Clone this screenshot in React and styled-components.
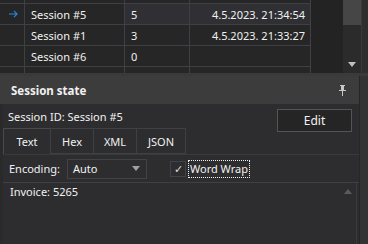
import styled, { createGlobalStyle } from "styled-components";

const Global = createGlobalStyle`
  body {
    margin: 0;
    background: #2d2d30;
    font-family: "Noto Sans", "Open Sans", sans-serif;
    font-size: 11px;
    color: #f1f1f1;
  }
`;

const Page = styled.div`
  width: 368px;
  height: 244px;
  overflow: hidden;
  display: flex;
  flex-direction: column;
  background: #333337;
`;

const GridArea = styled.div`
  height: 73px;
  flex-shrink: 0;
  display: flex;
  border-bottom: 3px solid #3a3a3a;
  background: #1e1e1e;
  overflow: hidden;
`;

const Table = styled.div`
  width: 343px;
  display: grid;
  grid-template-columns: 25px 100px 65px 121px 1fr;
  grid-auto-rows: 21px;
  margin-top: -17px;
  background: #232323;
`;

const Cell = styled.div`
  display: flex;
  align-items: center;
  justify-content: ${(p) => (p.$right ? "flex-end" : "flex-start")};
  padding: 0 ${(p) => (p.$right ? "5px" : "6px")};
  border-right: 1px solid ${(p) => (p.$blank ? "transparent" : "#3f3f46")};
  border-bottom: 1px solid ${(p) => (p.$blank ? "transparent" : "#3f3f46")};
  background: ${(p) => (p.$selected ? "#303034" : p.$blank ? "#232323" : "#262626")};
  color: #f1f1f1;
  white-space: nowrap;
`;

const Scrollbar = styled.div`
  width: 18px;
  display: flex;
  flex-direction: column;
  background: #2b2b2b;
`;

const Thumb = styled.div`
  height: 25px;
  background: #464646;
`;

const Track = styled.div`
  flex: 1;
  display: flex;
  align-items: flex-end;
  justify-content: center;
  padding-bottom: 6px;
`;

const Caret = styled.div`
  width: 0;
  height: 0;
  border-left: 4px solid transparent;
  border-right: 4px solid transparent;
  border-${(p) => (p.$up ? "bottom" : "top")}: 5px solid ${(p) => p.$color || "#9a9a9a"};
`;

const Edge = styled.div`
  flex: 1;
  border-left: 1px solid #3a3a3a;
  background: #2e2e2e;
`;

const Panel = styled.div`
  flex: 1;
  display: flex;
  background: #333333;
`;

const PanelBody = styled.div`
  width: 359px;
  display: flex;
  flex-direction: column;
  border-right: 1px solid #262626;
`;

const PanelHeader = styled.div`
  height: 28px;
  flex-shrink: 0;
  display: flex;
  align-items: center;
  justify-content: space-between;
  padding: 0 12px 0 11px;
  background: #3c3c3c;
  font-weight: bold;
  font-size: 11.5px;
`;

const Content = styled.div`
  flex: 1;
  display: flex;
  flex-direction: column;
  background: #2d2d30;
  border-left: 3px solid #2a2a2a;
`;

const TopRow = styled.div`
  height: 24px;
  flex-shrink: 0;
  display: flex;
  justify-content: space-between;
  align-items: flex-start;
  padding: 0 7px 0 5px;
`;

const IdText = styled.span`
  margin-top: 5px;
`;

const Button = styled.button`
  width: 75px;
  height: 23px;
  margin-top: 5px;
  position: relative;
  background: #252526;
  border: 1px solid #545454;
  color: #f1f1f1;
  font-family: inherit;
  font-size: 12px;
`;

const Tabs = styled.div`
  display: flex;
  height: 26px;
  flex-shrink: 0;
  border-bottom: 1px solid #3a3a3a;
`;

const Tab = styled.div`
  width: ${(p) => p.$w}px;
  display: flex;
  align-items: center;
  justify-content: center;
  border: 1px solid ${(p) => (p.$active ? "#4a4a4a" : "#3f3f46")};
  border-bottom: ${(p) => (p.$active ? "none" : "1px solid #3f3f46")};
  margin-left: -1px;
  background: #2d2d30;
  &:first-child {
    margin-left: 0;
  }
`;

const OptionsRow = styled.div`
  height: 27px;
  flex-shrink: 0;
  display: flex;
  align-items: center;
  padding-left: 6px;
  border-bottom: 1px solid #3f3f46;
`;

const Label = styled.span`
  width: 58px;
`;

const Combo = styled.div`
  width: 80px;
  height: 20px;
  display: flex;
  align-items: center;
  justify-content: space-between;
  padding: 0 6px 0 5px;
  box-sizing: border-box;
  border: 1px solid #434346;
  background: #2d2d30;
`;

const Check = styled.div`
  width: 16px;
  height: 16px;
  margin-left: 23px;
  box-sizing: border-box;
  border: 1px solid #434346;
  display: flex;
  align-items: center;
  justify-content: center;
  color: #dcdcdc;
  font-size: 11px;
`;

const CheckLabel = styled.span`
  margin-left: 3px;
  padding: 0 1px;
  outline: 1px dotted #f1f1f1;
  line-height: 16px;
`;

const TextArea = styled.div`
  flex: 1;
  display: flex;
  justify-content: space-between;
  padding: 0 0 0 7px;
  border-right: 1px solid #3a3a3a;
  margin-right: 2px;
`;

const TextLine = styled.div`
  line-height: 17px;
`;

const TextScroll = styled.div`
  width: 17px;
  padding-top: 6px;
  display: flex;
  justify-content: center;
`;

function Pin() {
  return (
    <svg width="9" height="11" viewBox="0 0 9 11">
      <path d="M2 0h5v1h-1v4h2v1H1V5h2V1H2z" fill="#c8c8c8" />
      <rect x="4" y="6" width="1" height="5" fill="#c8c8c8" />
    </svg>
  );
}

function RowArrow() {
  return (
    <svg width="10" height="8" viewBox="0 0 10 8" style={{ marginLeft: 3 }}>
      <path d="M0 4h9M5.5 0.5L9 4L5.5 7.5" stroke="#2f86dc" strokeWidth="1.2" fill="none" />
    </svg>
  );
}

const rows = [
  { name: "", count: "", date: "" },
  { name: "Session #5", count: "5", date: "4.5.2023. 21:34:54", cur: true },
  { name: "Session #1", count: "3", date: "4.5.2023. 21:33:27" },
  { name: "Session #6", count: "0", date: "" },
  { name: "", count: "", date: "" },
];

export default function App() {
  return (
    <Page>
      <Global />
      <GridArea>
        <Table>
          {rows.map((r, i) => [
            <Cell key={i + "h"}>{r.cur && <RowArrow />}</Cell>,
            <Cell key={i + "a"}>{r.name}</Cell>,
            <Cell key={i + "b"} $selected={r.cur}>{r.count}</Cell>,
            <Cell key={i + "c"} $selected={r.cur} $right>{r.date}</Cell>,
            <Cell key={i + "d"} $blank />,
          ])}
        </Table>
        <Scrollbar>
          <Thumb />
          <Track>
            <Caret $color="#c0c0c0" />
          </Track>
        </Scrollbar>
        <Edge />
      </GridArea>
      <Panel>
        <PanelBody>
          <PanelHeader>
            Session state
            <Pin />
          </PanelHeader>
          <Content>
            <TopRow>
              <IdText>Session ID: Session #5</IdText>
              <Button>Edit</Button>
            </TopRow>
            <Tabs>
              <Tab $w={46} $active>Text</Tab>
              <Tab $w={42}>Hex</Tab>
              <Tab $w={42}>XML</Tab>
              <Tab $w={48}>JSON</Tab>
            </Tabs>
            <OptionsRow>
              <Label>Encoding:</Label>
              <Combo>
                Auto
                <Caret $color="#a0a0a0" />
              </Combo>
              <Check>✓</Check>
              <CheckLabel>Word Wrap</CheckLabel>
            </OptionsRow>
            <TextArea>
              <TextLine>Invoice: 5265</TextLine>
              <TextScroll>
                <Caret $up $color="#5a5a5a" />
              </TextScroll>
            </TextArea>
          </Content>
        </PanelBody>
      </Panel>
    </Page>
  );
}
